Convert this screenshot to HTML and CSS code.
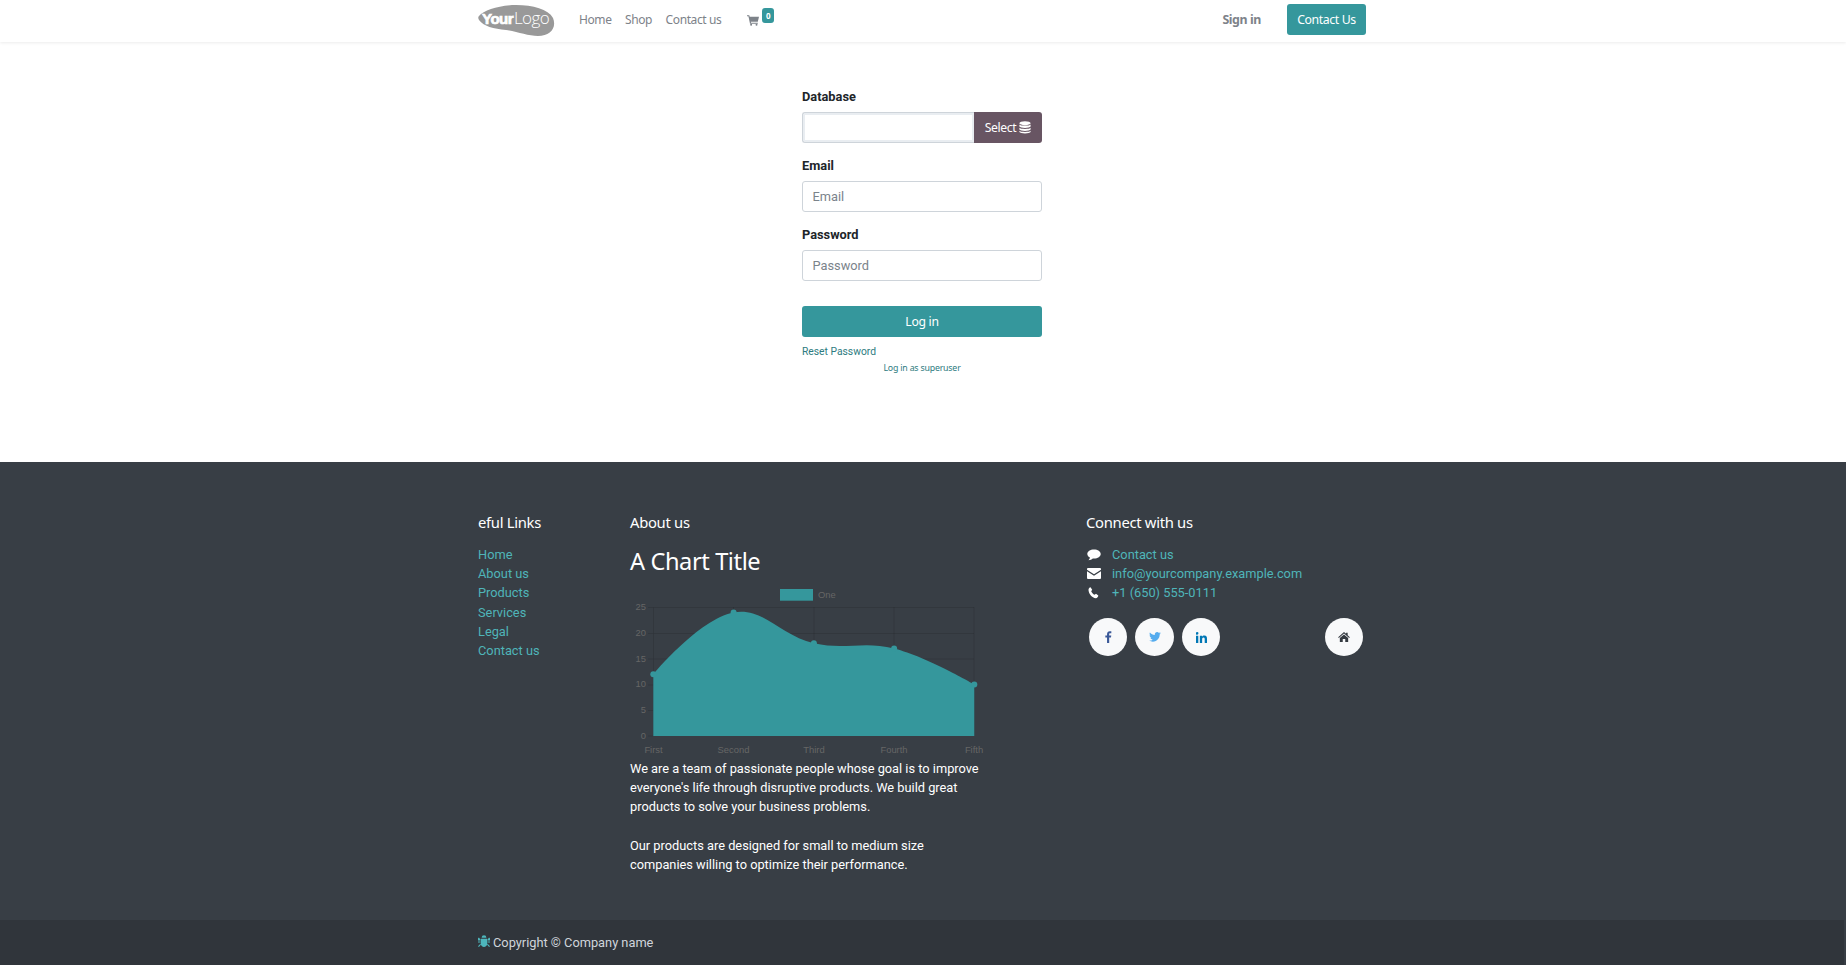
FILE: index.html
```html
<!DOCTYPE html>
<html lang="en">
<head>
<meta charset="utf-8">
<title>Login</title>
<link rel="stylesheet" href="styles.css">
</head>
<body>
<header class="topbar">
  <div class="container topbar-inner">
    <svg class="logo" viewBox="0 0 78 32" width="78" height="32">
      <path d="M1 12C6 6 22 1 38 1C55 1 70 5 75 14C79 24 72 32 60 32C50 32 40 28 28 26C16 25 5 22 1 16C0 14 0 13 1 12Z" fill="#999"/>
      <text class="logo-your" x="4" y="20">Your</text>
      <text class="logo-logo" x="36" y="20">Logo</text>
    </svg>
    <nav class="mainnav">
      <a href="#">Home</a>
      <a href="#">Shop</a>
      <a href="#">Contact us</a>
    </nav>
    <a class="cart" href="#">
      <svg class="cart-icon" viewBox="0 0 16 14" width="12" height="11"><path d="M0 0h3l.6 2H16l-1.6 6.5H5l.4 1.5h9v1.4H4L1.9 1.4H0z" fill="currentColor"/><circle cx="5.5" cy="12.7" r="1.3" fill="currentColor"/><circle cx="12.7" cy="12.7" r="1.3" fill="currentColor"/></svg>
      <span class="badge">0</span>
    </a>
    <a class="signin" href="#">Sign in</a>
    <a class="btn-contact" href="#">Contact Us</a>
  </div>
</header>

<main class="main">
  <form class="login">
    <div class="group">
      <label>Database</label>
      <div class="db-row">
        <input class="db-input" type="text">
        <a class="db-select" href="#">Select
          <svg viewBox="0 0 12 13" width="12" height="13"><g fill="currentColor"><ellipse cx="6" cy="2.2" rx="5.6" ry="2"/><path d="M.4 3.4C1 5 11 5 11.6 3.4V5.6C11 7.300 1 7.300 .4 5.600z"/><path d="M.4 6.700C1 8.300 11 8.300 11.600 6.700V8.600C11 10.300 1 10.300 .4 8.600z"/><path d="M.4 9.700C1 11.300 11 11.300 11.600 9.700V11C11 12.900 1 12.900 .4 11z"/></g></svg>
        </a>
      </div>
    </div>
    <div class="group">
      <label>Email</label>
      <input class="field" type="text" placeholder="Email">
    </div>
    <div class="group">
      <label>Password</label>
      <input class="field" type="text" placeholder="Password">
    </div>
    <button class="btn-login" type="button">Log in</button>
    <a class="reset" href="#">Reset Password</a>
    <a class="superuser" href="#">Log in as superuser</a>
  </form>
</main>

<footer class="footer">
  <div class="container footer-grid">
    <section class="col-links">
      <h5>eful Links</h5>
      <ul class="linklist">
        <li><a href="#">Home</a></li>
        <li><a href="#">About us</a></li>
        <li><a href="#">Products</a></li>
        <li><a href="#">Services</a></li>
        <li><a href="#">Legal</a></li>
        <li><a href="#">Contact us</a></li>
      </ul>
    </section>
    <section class="col-about">
      <h5>About us</h5>
      <h3>A Chart Title</h3>
      <svg class="chart" viewBox="0 0 355 173" width="355" height="173">
        <g class="grid">
          <path d="M23.500 24.500H344M23.500 50.500H344M23.500 76H344M23.500 102H344M23.500 127.500H344"/>
          <path d="M23.500 24V153M103.500 24V153M184 24V153M264 24V153M344 24V153"/>
          <path d="M18 24.500H23M18 50.500H23M18 76H23M18 102H23M18 127.500H23M18 153H23"/>
        </g>
        <rect x="150" y="6" width="33" height="11.700" fill="#35979c"/>
        <text x="188" y="14.500">One</text>
        <path d="M23.300 91.200C23.300 91.200 68.900 36.100 103.600 29.400C133.100 23.700 150.700 52.800 183.900 60.300C214.900 67.300 233.400 57.600 264.100 65.500C297.600 74.100 344.300 101.500 344.300 101.500L344.300 153L23.300 153Z" fill="#35979c"/>
        <g fill="#35979c">
          <circle cx="23.300" cy="91.200" r="3"/><circle cx="103.600" cy="29.400" r="3"/><circle cx="183.900" cy="60.300" r="3"/><circle cx="264.100" cy="65.500" r="3"/><circle cx="344.300" cy="101.500" r="3"/>
        </g>
        <g text-anchor="end">
          <text x="16" y="27.400">25</text><text x="16" y="53.400">20</text><text x="16" y="79">15</text><text x="16" y="104">10</text><text x="16" y="130">5</text><text x="16" y="155.700">0</text>
        </g>
        <g text-anchor="middle">
          <text x="23.500" y="170">First</text><text x="103.500" y="170">Second</text><text x="184" y="170">Third</text><text x="264" y="170">Fourth</text><text x="344" y="170">Fifth</text>
        </g>
      </svg>
      <p>We are a team of passionate people whose goal is to improve everyone's life through disruptive products. We build great products to solve your business problems.</p>
      <p>Our products are designed for small to medium size companies willing to optimize their performance.</p>
    </section>
    <section class="col-connect">
      <h5>Connect with us</h5>
      <ul class="contacts">
        <li><svg class="ci" viewBox="0 0 14 12" width="14" height="12"><path d="M7 0.500C3.200 0.500 .3 2.500 .3 5C.3 6.500 1.400 7.800 3 8.600C2.800 9.600 2.200 10.500 1.500 11.200C3.200 11 4.700 10.300 5.800 9.400C6.200 9.500 6.600 9.500 7 9.500C10.800 9.500 13.700 7.500 13.700 5S10.800 .5 7 .5z" fill="#fff"/></svg><a href="#">Contact us</a></li>
        <li><svg class="ci" viewBox="0 0 14 11" width="14" height="11"><path d="M1 0h12a1 1 0 0 1 1 1v.8L7 6.300 0 1.800V1a1 1 0 0 1 1-1zM0 3.300l7 4.400 7-4.400V10a1 1 0 0 1-1 1H1a1 1 0 0 1-1-1z" fill="#fff"/></svg><a href="#">info@yourcompany.example.com</a></li>
        <li><svg class="ci" viewBox="0 0 14 12" width="14" height="12"><path d="M3.500 0.300L5.200 2.800 4.200 4.200C4.800 5.800 6 7 7.600 7.700L9 6.700 11.300 8.500C11.300 9.800 10 11.300 8.800 11.200 5 10.800 1.800 7.200 1.500 3 1.400 1.600 2.400 .5 3.500 .3z" fill="#fff"/></svg><a href="#">+1 (650) 555-0111</a></li>
      </ul>
      <div class="social">
        <a class="round" href="#"><svg viewBox="0 0 8 14" width="7" height="12"><path d="M2.300 14V7.700H.3V5.300h2V3.500C2.300 1.400 3.600.2 5.400.2c.9 0 1.700.1 1.900.1v2.200H6c-1 0-1.200.5-1.200 1.200v1.600h2.400l-.3 2.400H4.800V14z" fill="#3b5998"/></svg></a>
        <a class="round round-wide" href="#"><svg viewBox="0 0 14 12" width="12" height="10"><path d="M14 1.500c-.5.200-1.100.4-1.700.5.600-.4 1.100-1 1.300-1.600-.6.300-1.200.6-1.800.7C11.200.4 10.400 0 9.600 0 8 0 6.700 1.300 6.700 2.900c0 .2 0 .4.100.7C4.400 3.500 2.300 2.300.9.500.6 1 .5 1.500.5 2c0 1 .5 1.900 1.300 2.400-.5 0-.9-.1-1.300-.4 0 1.400 1 2.600 2.300 2.900-.4.100-.9.100-1.300 0 .4 1.200 1.400 2 2.700 2C3.200 10 1.600 10.500 0 10.300 1.300 11.200 2.800 11.600 4.400 11.600c5.300 0 8.200-4.400 8.200-8.200v-.4c.6-.4 1-.9 1.400-1.500z" fill="#55acee"/></svg></a>
        <a class="round" href="#"><svg viewBox="0 0 12 12" width="11" height="11"><path d="M0 4h2.500v8H0zM1.250 0a1.400 1.400 0 1 1 0 2.900 1.400 1.400 0 0 1 0-2.900zM4.200 4h2.400v1.100C7 4.400 7.900 3.800 9.100 3.800c2.500 0 2.900 1.600 2.900 3.800V12H9.500V8c0-1-.1-2.100-1.300-2.100S6.700 6.900 6.700 8v4H4.200z" fill="#0077b5"/></svg></a>
        <a class="round round-home" href="#"><svg viewBox="0 0 14 12" width="12" height="10"><path d="M7 0L9.500 2.200V1H11.400V3.900L14 6.200 13.200 7.100 7 1.700.8 7.100 0 6.200zM7 3L12 7.300V12H8.500V8.500H5.500V12H2V7.300z" fill="#343a40"/></svg></a>
      </div>
    </section>
  </div>
  <div class="copyright">
    <div class="container copy-inner">
      <svg class="bug" viewBox="0 0 13 13" width="12" height="12"><path d="M4 2.500a2.500 2.200 0 0 1 5 0v.500H4zM3 4h7v5.500C10 11.500 8.300 13 6.500 13S3 11.500 3 9.500zM0 3.500L1 2.800 2.500 4.600V6H0V5zM13 3.500L12 2.800 10.500 4.600V6H13V5zM0 7h2.500v1H0zM10.500 7H13v1h-2.500zM2.600 9.500l.5 1L1 13l-1-.8zM10.400 9.500l-.5 1L12 13l1-.8z" fill="#4db6bc"/></svg>
      <span>Copyright © Company name</span>
    </div>
  </div>
</footer>
</body>
</html>
```
FILE: styles.css
```css
* { box-sizing: border-box; }
html, body { margin: 0; padding: 0; }
body {
  width: 1846px;
  height: 965px;
  overflow: hidden;
  padding-right: 2px;
  font-family: Roboto, "Liberation Sans", sans-serif;
  font-size: 12.800px;
  color: #212529;
  background: #fff;
  display: flex;
  flex-direction: column;
}
a { text-decoration: none; }
.container { width: 888px; margin: 0 auto; }

/* top bar */
.topbar {
  height: 42px;
  margin-right: -2px;
  padding-right: 2px;
  background: #fff;
  box-shadow: 0 1px 3px rgba(0, 0, 0, .08);
  flex: none;
}
.topbar-inner {
  display: flex;
  align-items: center;
  height: 39px;
  font-family: "Noto Sans", sans-serif;
}
.logo { flex: none; margin-top: 1px; }
.logo-your { font-family: "Liberation Sans", sans-serif; font-weight: 700; font-size: 15px; letter-spacing: -.5px; fill: #fff; stroke: #fff; stroke-width: .7px; }
.logo-logo { font-family: "Open Sans", sans-serif; font-weight: 300; font-size: 17px; letter-spacing: -.6px; fill: #fff; }
.mainnav { display: flex; gap: 13.500px; margin-left: 23px; }
.mainnav a { color: #7d8289; font-size: 12px; letter-spacing: -.4px; }
.cart { position: relative; margin-left: 26px; color: #7d8289; display: flex; }
.cart-icon { margin-top: 2px; }
.badge {
  position: absolute;
  left: 15px;
  top: -5px;
  width: 12px;
  height: 15px;
  border-radius: 3px;
  background: #35979c;
  color: #fff;
  font-size: 8px;
  font-weight: 700;
  text-align: center;
  line-height: 15px;
}
.signin { margin-left: auto; color: #7d8289; font-weight: 700; font-size: 12.400px; letter-spacing: -.4px; }
.btn-contact {
  margin-left: 26px;
  background: #35979c;
  color: #fff;
  width: 79px;
  height: 31px;
  border-radius: 3px;
  text-align: center;
  line-height: 31px;
  font-size: 12.300px;
  letter-spacing: -.4px;
}

/* login */
.main { flex: 1; display: flex; justify-content: center; }
.login { width: 240px; margin-top: 45px; display: flex; flex-direction: column; }
.group { display: flex; flex-direction: column; margin-bottom: 13px; }
.group label { font-weight: 700; font-size: 12.800px; line-height: 20px; margin-bottom: 5px; color: #212529; }
.db-row { display: flex; height: 31px; }
.db-input {
  flex: 1;
  min-width: 0;
  height: 31px;
  border: 1px solid #ced4da;
  border-right: 0;
  border-radius: 3px 0 0 3px;
  box-shadow: inset 0 0 0 2px #e9edf1;
  background: #fff;
}
.db-select {
  width: 68px;
  background: #685563;
  color: #fff;
  border-radius: 0 3px 3px 0;
  display: flex;
  align-items: center;
  justify-content: center;
  gap: 3px;
  font-family: "Noto Sans", sans-serif;
  font-size: 12.200px;
  letter-spacing: -.4px;
}
.field {
  height: 31px;
  border: 1px solid #ced4da;
  border-radius: 3px;
  padding: 0 9.500px;
  font-family: Roboto, sans-serif;
  font-size: 12.800px;
  color: #495057;
}
.field::placeholder { color: #7b838b; }
.btn-login {
  margin-top: 12px;
  height: 31px;
  background: #35979c;
  border: 0;
  border-radius: 3px;
  color: #fff;
  font-family: "Noto Sans", sans-serif;
  font-size: 12.200px;
  letter-spacing: -.3px;
}
.reset { margin-top: 7px; font-size: 10.300px; line-height: 16px; color: #2d7b80; }
.superuser { margin-top: 0; text-align: center; font-family: "Noto Sans", sans-serif; font-size: 8.800px; letter-spacing: -.2px; line-height: 16px; color: #2d7b80; }

/* footer */
.footer { flex: none; height: 503px; margin-right: -2px; padding-right: 2px; background: #383e45; display: flex; flex-direction: column; color: #fff; }
.footer-grid { flex: 1; display: grid; grid-template-columns: 152px 456px 280px; padding-top: 50px; }
.footer h5 { margin: 0; font-family: "Noto Sans", sans-serif; font-weight: 400; font-size: 14.800px; line-height: 21px; letter-spacing: -.3px; }
.linklist, .contacts { list-style: none; margin: 12px 0 0; padding: 0; line-height: 19.200px; }
.footer a { color: #4fb5b9; }
.linklist li { height: 19.200px; }
.col-about h3 { margin: 11px 0 0; font-family: "Noto Sans", sans-serif; font-weight: 400; font-size: 23.600px; line-height: 34px; letter-spacing: -.4px; }
.chart { display: block; margin: 5px 0 3px; }
.chart text { font-family: "Liberation Sans", sans-serif; font-size: 9.400px; fill: #666; }
.grid path { stroke: rgba(0, 0, 0, .1); stroke-width: 1; fill: none; }
.col-about p { margin: 0 0 19.200px; width: 352px; font-size: 12.800px; line-height: 19.200px; }
.contacts li { display: flex; align-items: center; gap: 11px; height: 19.200px; }
.ci { flex: none; margin-left: 1px; }
.social { display: flex; gap: 8px; margin-top: 15.500px; padding-left: 3px; width: 277px; }
.round { width: 38px; height: 38px; border-radius: 50%; background: #f8f9fa; display: flex; align-items: center; justify-content: center; }
.round-wide { width: 39px; }
.round-home { margin-left: auto; }
.copyright { flex: none; height: 45px; background: #30353b; color: #cfd4da; }
.copy-inner { display: flex; align-items: center; gap: 3px; height: 45px; }
.bug { margin-top: -3px; }
```
